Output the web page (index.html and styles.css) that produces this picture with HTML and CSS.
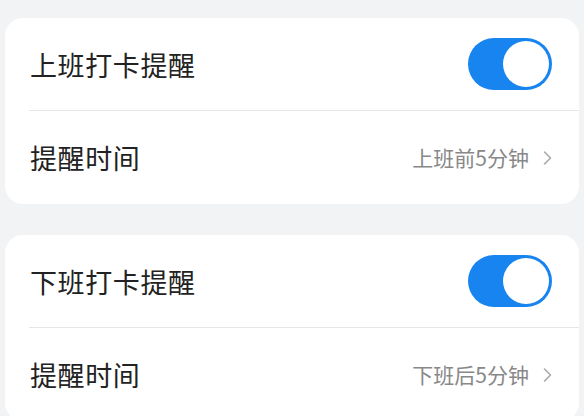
FILE: index.html
```html
<!DOCTYPE html>
<html lang="zh-CN">
<head>
<meta charset="utf-8">
<title>打卡提醒</title>
<link rel="stylesheet" href="styles.css">
</head>
<body>
<div class="page">
  <section class="card">
    <div class="row">
      <span class="label">上班打卡提醒</span>
      <span class="switch on"><span class="knob"></span></span>
    </div>
    <div class="divider"></div>
    <div class="row row-bottom">
      <span class="label">提醒时间</span>
      <span class="value">上班前5分钟
        <svg class="chev" width="9" height="16" viewBox="0 0 9 16"><path d="M1.5 2 L7.5 8 L1.5 14" fill="none" stroke="#a9a9a9" stroke-width="1.6" stroke-linecap="round" stroke-linejoin="round"/></svg>
      </span>
    </div>
  </section>
  <section class="card">
    <div class="row">
      <span class="label">下班打卡提醒</span>
      <span class="switch on"><span class="knob"></span></span>
    </div>
    <div class="divider"></div>
    <div class="row row-bottom">
      <span class="label">提醒时间</span>
      <span class="value">下班后5分钟
        <svg class="chev" width="9" height="16" viewBox="0 0 9 16"><path d="M1.5 2 L7.5 8 L1.5 14" fill="none" stroke="#a9a9a9" stroke-width="1.6" stroke-linecap="round" stroke-linejoin="round"/></svg>
      </span>
    </div>
  </section>
</div>
</body>
</html>
```
FILE: styles.css
```css
html, body {
  margin: 0;
  padding: 0;
  background: #f2f3f5;
}
body {
  font-family: "Noto Sans CJK SC", "Noto Sans", sans-serif;
  color: #222222;
}
.page {
  padding: 18px 5px 0;
  display: flex;
  flex-direction: column;
  gap: 31px;
}
.card {
  background: #ffffff;
  border-radius: 18px;
  overflow: hidden;
}
.row {
  height: 92px;
  display: flex;
  align-items: center;
  justify-content: space-between;
  padding: 0 27px 0 25px;
}
.row-bottom {
  height: 93px;
}
.label {
  font-size: 27px;
  line-height: 1;
  letter-spacing: 0.6px;
}
.divider {
  height: 1px;
  margin-left: 24px;
  background: #e6e7e9;
}
.value {
  display: flex;
  align-items: center;
  gap: 14px;
  font-size: 21px;
  line-height: 1;
  color: #888888;
}
.chev {
  display: block;
}
.switch {
  width: 84px;
  height: 52px;
  border-radius: 26px;
  background: #e5e5ea;
  display: flex;
  align-items: center;
  padding: 0 3px;
  box-sizing: border-box;
}
.switch.on {
  background: #1784f0;
  justify-content: flex-end;
}
.knob {
  width: 46px;
  height: 46px;
  border-radius: 50%;
  background: #ffffff;
}
```
